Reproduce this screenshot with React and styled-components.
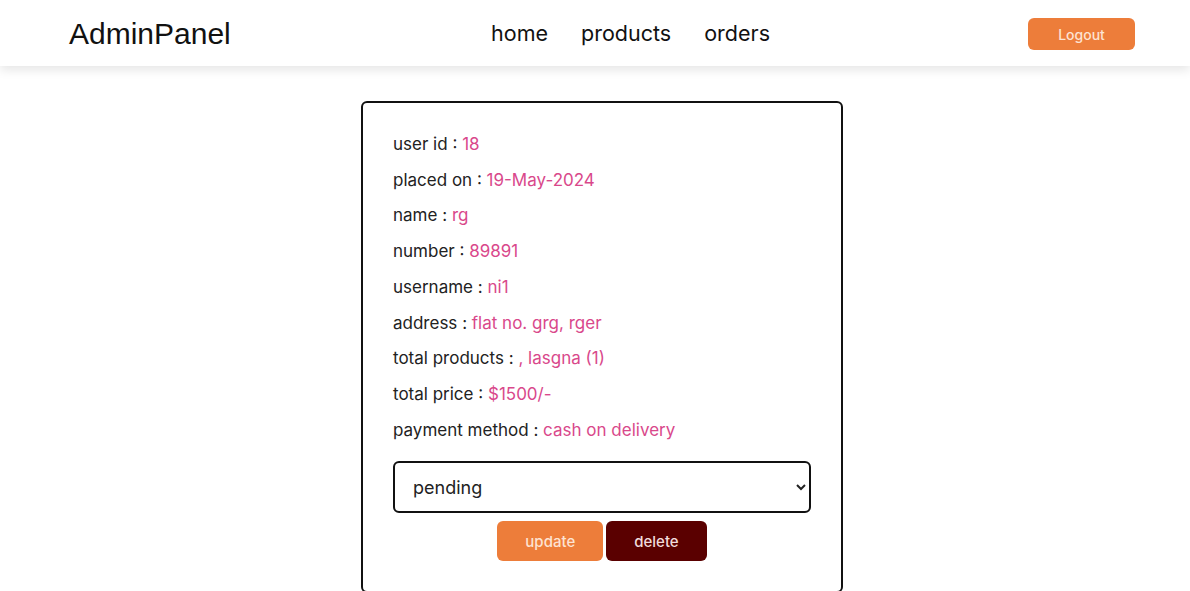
import React from "react";
import styled, { createGlobalStyle } from "styled-components";

const GlobalStyle = createGlobalStyle`
  * { box-sizing: border-box; }
  body {
    margin: 0;
    background: #fff;
    font-family: Inter, "Noto Sans", sans-serif;
  }
`;

const order = {
  userId: 18,
  placedOn: "19-May-2024",
  name: "rg",
  number: "89891",
  username: "ni1",
  address: "flat no. grg, rger",
  products: ", lasgna (1)",
  price: "$1500/-",
  method: "cash on delivery",
};

function App() {
  const rows = [
    ["user id", order.userId],
    ["placed on", order.placedOn],
    ["name", order.name],
    ["number", order.number],
    ["username", order.username],
    ["address", order.address],
    ["total products", order.products],
    ["total price", order.price],
    ["payment method", order.method],
  ];

  return (
    <>
      <GlobalStyle />
      <Header>
        <Logo>AdminPanel</Logo>
        <Nav>
          <a href="#">home</a>
          <a href="#">products</a>
          <a href="#">orders</a>
        </Nav>
        <LogoutBtn>Logout</LogoutBtn>
      </Header>

      <Main>
        <Card>
          {rows.map(([label, value]) => (
            <Row key={label}>
              {label} : <span>{value}</span>
            </Row>
          ))}
          <Select defaultValue="pending">
            <option value="pending">pending</option>
            <option value="completed">completed</option>
          </Select>
          <Actions>
            <ActionBtn $bg="#ed7d3a" $color="#fde3d2">update</ActionBtn>
            <ActionBtn $bg="#5a0000" $color="#f1dcdc">delete</ActionBtn>
          </Actions>
        </Card>
      </Main>
    </>
  );
}

const Header = styled.header`
  height: 66px;
  display: flex;
  align-items: center;
  padding: 0 55px 0 69px;
  background: #fff;
  box-shadow: 0 4px 10px rgba(0, 0, 0, 0.1);
  position: relative;
`;

const Logo = styled.div`
  font-family: "Liberation Sans", Arial, sans-serif;
  font-size: 30px;
  color: #111;
  margin-right: auto;
  margin-top: 1px;
`;

const Nav = styled.nav`
  display: flex;
  gap: 33px;
  margin-right: 258px;
  a {
    font-size: 21.5px;
    color: #111;
    text-decoration: none;
  }
`;

const LogoutBtn = styled.button`
  width: 107px;
  height: 32px;
  margin-top: 2px;
  border: none;
  border-radius: 6px;
  background: #ed7d3a;
  color: #fde3d2;
  font-family: inherit;
  font-size: 14px;
  font-weight: 500;
`;

const Main = styled.main`
  display: flex;
  justify-content: center;
  padding: 35px 0 0 14px;
`;

const Card = styled.div`
  width: 482px;
  border: 2px solid #111;
  border-radius: 6px;
  padding: 24px 30px 30px;
`;

const Row = styled.p`
  margin: 0;
  line-height: 35.7px;
  font-size: 17px;
  color: #222;
  span {
    color: #d9488b;
  }
`;

const Select = styled.select`
  display: block;
  width: 100%;
  height: 52px;
  margin-top: 13px;
  border: 2px solid #111;
  border-radius: 6px;
  padding: 0 14px;
  font-family: inherit;
  font-size: 18px;
  color: #222;
  background: #fff;
`;

const Actions = styled.div`
  display: flex;
  justify-content: center;
  gap: 3px;
  margin-top: 8px;
`;

const ActionBtn = styled.button`
  height: 40px;
  padding: 0 28px;
  border: none;
  border-radius: 6px;
  background: ${(p) => p.$bg};
  color: ${(p) => p.$color};
  font-family: inherit;
  font-size: 15px;
  font-weight: 500;
`;

export default App;
